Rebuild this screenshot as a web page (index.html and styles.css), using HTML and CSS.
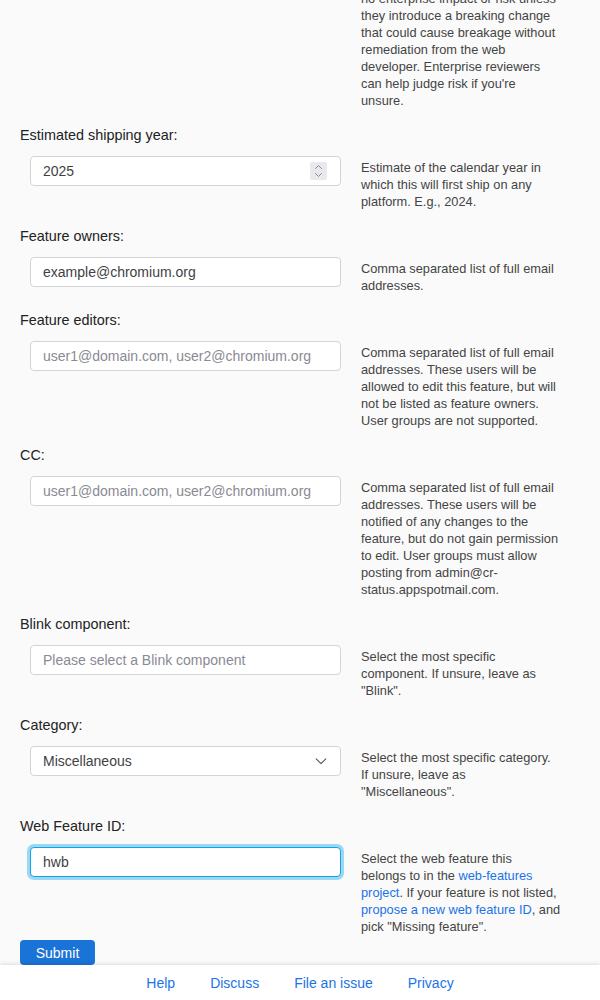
FILE: index.html
```html
<!DOCTYPE html>
<html lang="en">
<head>
<meta charset="utf-8">
<title>Edit feature</title>
<link rel="stylesheet" href="styles.css">
</head>
<body>
<div class="page">
  <main class="content">
    <div class="row first-row">
      <div class="cell"></div>
      <div class="help">no enterprise impact or risk unless they introduce a breaking change that could cause breakage without remediation from the web developer. Enterprise reviewers can help judge risk if you're unsure.</div>
    </div>

    <section class="field">
      <div class="label">Estimated shipping year:</div>
      <div class="row">
        <div class="box">
          <input class="box-input" type="text" value="2025">
          <span class="spin" aria-hidden="true">
            <svg width="17" height="18" viewBox="0 0 17 18"><path d="M5.5 6.5 8.5 3.5l3 3M5.5 11.5l3 3 3-3" fill="none" stroke="#8a8a90" stroke-width="1" stroke-linecap="round" stroke-linejoin="round"/></svg>
          </span>
        </div>
        <div class="help">Estimate of the calendar year in which this will first ship on any platform. E.g., 2024.</div>
      </div>
    </section>

    <section class="field">
      <div class="label">Feature owners:</div>
      <div class="row">
        <input class="input" type="text" value="example@chromium.org">
        <div class="help">Comma separated list of full email addresses.</div>
      </div>
    </section>

    <section class="field">
      <div class="label">Feature editors:</div>
      <div class="row">
        <input class="input" type="text" placeholder="user1@domain.com, user2@chromium.org">
        <div class="help">Comma separated list of full email addresses. These users will be allowed to edit this feature, but will not be listed as feature owners. User groups are not supported.</div>
      </div>
    </section>

    <section class="field">
      <div class="label">CC:</div>
      <div class="row">
        <input class="input" type="text" placeholder="user1@domain.com, user2@chromium.org">
        <div class="help">Comma separated list of full email addresses. These users will be notified of any changes to the feature, but do not gain permission to edit. User groups must allow posting from admin@cr-status.appspotmail.com.</div>
      </div>
    </section>

    <section class="field">
      <div class="label">Blink component:</div>
      <div class="row">
        <input class="input" type="text" placeholder="Please select a Blink component">
        <div class="help">Select the most specific component. If unsure, leave as "Blink".</div>
      </div>
    </section>

    <section class="field">
      <div class="label">Category:</div>
      <div class="row">
        <div class="box select">
          <span class="select-value">Miscellaneous</span>
          <svg class="chevron" width="14" height="14" viewBox="0 0 16 16" aria-hidden="true"><path d="M2.5 5.5 8 11l5.5-5.5" fill="none" stroke="#52525b" stroke-width="1.2" stroke-linecap="round" stroke-linejoin="round"/></svg>
        </div>
        <div class="help">Select the most specific category. If unsure, leave as "Miscellaneous".</div>
      </div>
    </section>

    <section class="field">
      <div class="label">Web Feature ID:</div>
      <div class="row">
        <input class="input focused" type="text" value="hwb">
        <div class="help">Select the web feature this<br>belongs to in the <a href="#">web-features project</a>. If your feature is not listed, <a href="#">propose a new web feature ID</a>, and pick "Missing feature".</div>
      </div>
    </section>

    <div class="actions">
      <button class="submit" type="button">Submit</button>
    </div>
  </main>
  <footer class="footer">
    <a href="#">Help</a>
    <a href="#">Discuss</a>
    <a href="#">File an issue</a>
    <a href="#">Privacy</a>
  </footer>
</div>
</body>
</html>
```

FILE: styles.css
```css
html, body {
  margin: 0;
  padding: 0;
}
body {
  background: #fafafa;
  font-family: "Liberation Sans", Arial, sans-serif;
  color: #222;
}
.page {
  height: 100vh;
  display: flex;
  flex-direction: column;
  overflow: hidden;
}
.content {
  flex: 1;
  overflow: hidden;
  padding: 0 20px;
  display: flex;
  flex-direction: column;
  justify-content: flex-end;
}
.field {
  margin-top: 16.5px;
}
.label {
  font-size: 14.4px;
  line-height: 20px;
  height: 20px;
  color: #222;
}
.row {
  display: grid;
  grid-template-columns: 311px 200px;
  column-gap: 20px;
  margin-left: 10px;
  margin-top: 11px;
  align-items: start;
}
.first-row {
  margin-top: 0;
}
.help {
  font-size: 12.8px;
  line-height: 17px;
  color: #444;
  margin-top: 2.5px;
}
.help a {
  color: #1a73e8;
  text-decoration: none;
}
.input,
.box {
  box-sizing: border-box;
  width: 311px;
  height: 30px;
  margin: 0;
  padding: 0 12px;
  border: 1px solid #d4d4d8;
  border-radius: 4px;
  background: #fff;
  font-family: "Liberation Sans", Arial, sans-serif;
  font-size: 14px;
  color: #3f3f46;
  outline: none;
}
.box {
  display: flex;
  align-items: center;
  justify-content: space-between;
}
.box-input {
  flex: 1;
  min-width: 0;
  border: none;
  outline: none;
  padding: 0;
  margin: 0;
  background: transparent;
  font-family: inherit;
  font-size: 14px;
  color: #3f3f46;
}
.spin {
  display: block;
  width: 17px;
  height: 18px;
  background: #e9e9ed;
  border-radius: 2px;
  margin-right: 1px;
}
.spin svg {
  display: block;
}
.input::placeholder {
  color: #8a8a93;
}
.input.focused {
  border-color: #0ea5e9;
  box-shadow: 0 0 0 3px rgba(14, 165, 233, 0.4);
}
.chevron {
  display: block;
}
.actions {
  margin-top: 5.5px;
  display: flex;
}
.submit {
  width: 75px;
  height: 25px;
  padding: 0;
  border: none;
  border-radius: 4px;
  background: #1a73d6;
  color: #fff;
  font-family: "Liberation Sans", Arial, sans-serif;
  font-size: 14px;
}
.footer {
  height: 35px;
  flex: none;
  background: #fff;
  box-shadow: 0 -1px 4px rgba(0, 0, 0, 0.12);
  display: flex;
  justify-content: center;
  align-items: center;
  gap: 35px;
  position: relative;
}
.footer a {
  font-size: 14px;
  color: #1a73e8;
  text-decoration: none;
}
```
